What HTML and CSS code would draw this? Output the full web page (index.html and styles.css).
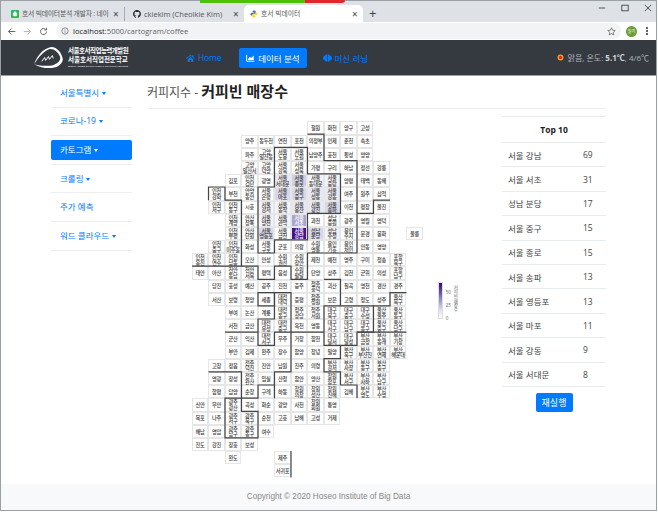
FILE: index.html
```html
<!DOCTYPE html>
<html lang="ko">
<head>
  <meta charset="UTF-8" />
  <title>호서 빅데이터</title>
  <link rel="stylesheet" href="styles.css">
</head>
<body>
  <div class="window">
    <div class="overhang"><span class="bar-green"></span><span class="bar-red"></span></div>

    <div class="tabs">
      <div class="tab tab-first">
        <svg class="favicon" viewBox="0 0 16 16"><rect width="16" height="16" rx="2" fill="#2db84d"/><path d="M4 6h8l-1 6H5zM6 6c0-2 1-3 2-3s2 1 2 3" fill="#fff" stroke="#fff"/></svg>
        <span class="tab-title">호서 빅데이터분석 개발자 : 네이</span>
        <span class="tab-x">×</span>
      </div>
      <div class="tab tab-second">
        <svg class="favicon" viewBox="0 0 16 16"><path fill="#24292e" d="M8 0C3.58 0 0 3.58 0 8c0 3.54 2.29 6.53 5.47 7.59.4.07.55-.17.55-.38 0-.19-.01-.82-.01-1.49-2.01.37-2.53-.49-2.69-.94-.09-.23-.48-.94-.82-1.13-.28-.15-.68-.52-.01-.53.63-.01 1.08.58 1.23.82.72 1.21 1.87.87 2.33.66.07-.52.28-.87.51-1.07-1.78-.2-3.64-.89-3.64-3.95 0-.87.31-1.59.82-2.15-.08-.2-.36-1.02.08-2.12 0 0 .67-.21 2.2.82.64-.18 1.32-.27 2-.27.68 0 1.36.09 2 .27 1.53-1.04 2.2-.82 2.2-.82.44 1.1.16 1.92.08 2.12.51.56.82 1.27.82 2.15 0 3.07-1.87 3.75-3.65 3.95.29.25.54.73.54 1.48 0 1.07-.01 1.93-.01 2.2 0 .21.15.46.55.38A8.013 8.013 0 0016 8c0-4.42-3.58-8-8-8z"/></svg>
        <span class="tab-title">ckiekim (Cheolkie Kim)</span>
        <span class="tab-x">×</span>
      </div>
      <div class="tab tab-active">
        <svg class="favicon" viewBox="0 0 16 16"><path fill="#3776ab" d="M8 1C5 1 5 2.5 5 3.5V5h3.5v1H3.5C2 6 1 7 1 8.5S2 11 3.5 11H5V9.5C5 8 6 7.5 7 7.5h3c1 0 1.500-.7 1.500-1.500V3.500C11.500 2 10 1 8 1z"/><path fill="#ffd43b" d="M8 15c3 0 3-1.500 3-2.500V11H7.500v-1h5c1.500 0 2.500-1 2.500-2.500S14 5 12.500 5H11v1.500C11 8 10 8.500 9 8.500H6c-1 0-1.500.7-1.500 1.500v2.500C4.500 14 6 15 8 15z"/></svg>
        <span class="tab-title">호서 빅데이터</span>
        <span class="tab-x">×</span>
      </div>
      <span class="tab-new">+</span>
      <div class="win-btns">
        <svg viewBox="0 0 10 10"><path d="M1 5h8" stroke="#333" stroke-width="1"/></svg>
        <svg viewBox="0 0 10 10"><rect x="1" y="1.500" width="8" height="7" fill="none" stroke="#333"/></svg>
        <svg viewBox="0 0 10 10"><path d="M1 1l8 8M9 1l-8 8" stroke="#333"/></svg>
      </div>
    </div>

    <div class="toolbar">
      <svg class="tool-icon" viewBox="0 0 12 12"><path d="M11 6H2M6 2L2 6l4 4" fill="none" stroke="#5f6368" stroke-width="1.300"/></svg>
      <svg class="tool-icon" viewBox="0 0 12 12"><path d="M1 6h9M6 2l4 4-4 4" fill="none" stroke="#b4b7bb" stroke-width="1.300"/></svg>
      <svg class="tool-icon" viewBox="0 0 12 12"><path d="M10 6a4 4 0 1 1-1.200-2.800M10 1v3H7" fill="none" stroke="#5f6368" stroke-width="1.300"/></svg>
      <div class="address">
        <svg class="info" viewBox="0 0 12 12"><circle cx="6" cy="6" r="4.800" fill="none" stroke="#5f6368"/><path d="M6 5.500v3M6 3.500v1" stroke="#5f6368"/></svg>
        <span class="url">localhost<span class="url-path">:5000/cartogram/coffee</span></span>
        <svg class="star" viewBox="0 0 12 12"><path d="M6 1l1.500 3.300 3.500.4-2.600 2.300.7 3.500L6 8.700 2.900 10.500l.7-3.500L1 4.700l3.500-.4z" fill="none" stroke="#5f6368"/></svg>
      </div>
      <span class="avatar">철기</span>
      <span class="kebab"></span>
    </div>

    <nav class="nav">
      <a class="brand" href="#">
        <svg class="brand-mark" viewBox="0 0 32 24">
          <path d="M1 19C4 10 11 2 19 1 25 1 30 7 31 14 30 20 24 23 17 23 11 23 6 22 1 19 8 21 15 21 21 20 26 18 29 15 28 11 26 6 22 3 18 3 12 4 6 11 1 19z" fill="#fff"/>
          <path d="M9 16l3-4 1 3 3-4 1 3 3-4 1 3" fill="none" stroke="#fff" stroke-width="1"/>
        </svg>
        <span class="brand-text">
          <b class="brand-line1">서울호서직업능력개발원</b>
          <b class="brand-line2">서울호서직업전문학교</b>
          <small>SEOUL HOSEO OCCUPATIONAL TRAINING COLLEGE</small>
        </span>
      </a>
      <a class="nav-link nav-home" href="#">
        <svg class="nav-icon" viewBox="0 0 16 14"><path fill="#007bff" d="M8 1L0 7.500l1 1L8 3l7 5.500 1-1-3-2.500V2h-2v1.500zM3 9v5h3.500v-3.500h3V14H13V9L8 5z"/></svg>
        Home
      </a>
      <a class="nav-link nav-active" href="#">
        <svg class="nav-icon" viewBox="0 0 14 12"><path d="M1 1v10h12" fill="none" stroke="#fff" stroke-width="1.500"/><path d="M3 8l3-4 2 2 4-4v7H3z" fill="#fff"/></svg>
        데이터 분석
      </a>
      <a class="nav-link" href="#">
        <svg class="nav-icon" viewBox="0 0 14 12"><path fill="#007bff" d="M6.500 0C4 0 3.500 1.500 3.500 2 1.500 2.500 0 4 0 6s1.500 3.500 3.500 4c0 1 1.500 2 3 2zM7.500 0c2.500 0 3 1.500 3 2 2 .5 3.500 2 3.500 4s-1.500 3.500-3.500 4c0 1-1.500 2-3 2z"/></svg>
        머신 러닝
      </a>
      <div class="weather">
        <svg class="sun" viewBox="0 0 12 12"><circle cx="6" cy="6" r="5" fill="#f5a623"/><circle cx="6" cy="6" r="2.800" fill="#e2231a"/></svg>
        <span>맑음, 온도: <b>5.1℃</b>, 4/6℃</span>
      </div>
    </nav>

    <div class="main">
      <ul class="side">
        <li><a href="#" class="caret">서울특별시</a></li>
        <li><a href="#" class="caret">코로나-19</a></li>
        <li><a href="#" class="caret side-active">카토그램</a></li>
        <li><a href="#" class="caret">크롤링</a></li>
        <li><a href="#">주가 예측</a></li>
        <li><a href="#" class="caret">워드 클라우드</a></li>
      </ul>

      <div class="content">
        <h3 class="title"><span class="title-sub">커피지수 - </span><strong>커피빈 매장수</strong></h3>
        <div class="content-body">
          <div class="carto" id="carto">
            <svg class="borders" viewBox="0 0 14 27" preserveAspectRatio="none">
              <path d="M5 2H7V4H9V7H7V9H5V10H4V5H5Z"/>
              <path d="M1 6V5H2V6H3V11"/>
              <path d="M0 11H4V12H5V11H6V12H7V10H10V3H8V1H7"/>
              <path d="M12 6H11V7H10"/>
              <path d="M4 13H5V14H4Z"/>
              <path d="M5 13H6V16H5V17H4V15H5Z"/>
              <path d="M2 16H4"/>
              <path d="M6 16V19H5V21"/>
              <path d="M5 20H4V21H3V19H1"/>
              <path d="M2 21H3V22H4V24H2Z"/>
              <path d="M6 25V27"/>
              <path d="M6 16H8"/>
              <path d="M8 12H9V14H8V17H10V16H11V14H9"/>
              <path d="M9 17V18H8V19H9V20H10V21"/>
              <path d="M10 16H13"/>
              <path d="M11 14H12V13H13"/>
            </svg>
            <div class="legend">
              <span class="legend-bar"></span>
              <span class="tick tick-50">50</span>
              <span class="tick tick-25">25</span>
              <span class="tick tick-0">0</span>
              <span class="legend-title">커피빈 매장수</span>
            </div>
          </div>

          <div class="top">
            <table class="top-table">
              <thead><tr><th colspan="2">Top 10</th></tr></thead>
              <tbody>
                <tr><td>서울 강남</td><td>69</td></tr>
                <tr><td>서울 서초</td><td>31</td></tr>
                <tr><td>성남 분당</td><td>17</td></tr>
                <tr><td>서울 중구</td><td>15</td></tr>
                <tr><td>서울 종로</td><td>15</td></tr>
                <tr><td>서울 송파</td><td>13</td></tr>
                <tr><td>서울 영등포</td><td>13</td></tr>
                <tr><td>서울 마포</td><td>11</td></tr>
                <tr><td>서울 강동</td><td>9</td></tr>
                <tr><td>서울 서대문</td><td>8</td></tr>
              </tbody>
            </table>
            <button class="rerun">재실행</button>
          </div>
        </div>
      </div>
    </div>

    <footer class="footer">Copyright © 2020 Hoseo Institute of Big Data</footer>
  </div>

  <script src="script.js"></script>
</body>
</html>
```

FILE: styles.css
```css
* {
  box-sizing: border-box;
}
body {
  margin: 0;
  font-family: "Open Sans", "Noto Sans CJK KR", sans-serif;
  background: white;
  color: #333;
}
a {
  text-decoration: none;
}
.window {
  position: relative;
  display: flex;
  flex-direction: column;
  width: 657px;
  height: 511px;
  border-left: 1px solid #9aa0a6;
  border-right: 1px solid #9aa0a6;
  border-bottom: 1px solid #9aa0a6;
  overflow: hidden;
}

/* browser frame */
.overhang {
  position: absolute;
  top: 0;
  left: 199px;
  display: flex;
  height: 3px;
  z-index: 2;
}
.bar-green {
  width: 105px;
  background: #4fc00a;
}
.bar-red {
  width: 40px;
  background: #e3262c;
  border-radius: 0 0 3px 0;
}
.tabs {
  display: flex;
  align-items: flex-end;
  flex: none;
  height: 22px;
  background: #dee1e6;
  border-top: 1px solid #9aa0a6;
}
.tab {
  display: flex;
  align-items: center;
  height: 17px;
  font-size: 6.800px;
  color: #555;
}
.tab-first {
  width: 124px;
  height: 14px;
  margin-bottom: 1px;
  padding-left: 10px;
  border-right: 1px solid #a9adb3;
}
.tab-first .tab-title {
  letter-spacing: -0.200px;
}
.tab-second {
  width: 119px;
  padding-left: 8px;
  font-size: 7.500px;
}
.tab-active {
  width: 119px;
  padding-left: 6px;
  background: white;
  border-radius: 5px 5px 0 0;
}
.favicon {
  flex: none;
  width: 8px;
  height: 8px;
  margin-right: 3px;
}
.tab-title {
  flex: 1;
  white-space: nowrap;
  line-height: 12px;
}
.tab-x {
  flex: none;
  width: 11px;
  font-size: 10px;
  line-height: 10px;
  color: #444;
}
.tab-new {
  margin: 0 0 1px 6px;
  font-size: 13px;
  line-height: 16px;
  color: #444;
}
.win-btns {
  display: flex;
  gap: 15px;
  margin-left: auto;
  align-self: flex-start;
  margin-top: 3px;
  padding-right: 4px;
}
.win-btns svg {
  width: 8px;
  height: 8px;
}
.toolbar {
  display: flex;
  align-items: center;
  flex: none;
  height: 18px;
  padding-left: 6px;
  background: white;
}
.tool-icon {
  flex: none;
  width: 9px;
  height: 9px;
  margin-right: 7px;
}
.address {
  display: flex;
  align-items: center;
  flex: none;
  width: 565px;
  height: 16px;
  margin-left: 1px;
  padding: 0 5px;
  background: #f1f3f4;
  border-radius: 8px;
}
.info {
  width: 8px;
  height: 8px;
  margin-right: 4px;
}
.url {
  flex: 1;
  font-size: 7.600px;
  color: #222;
}
.url-path {
  color: #5f6368;
}
.star {
  width: 9px;
  height: 9px;
}
.avatar {
  width: 11px;
  height: 11px;
  margin-left: 5px;
  border-radius: 50%;
  background: #6b9e35;
  color: white;
  font-size: 4px;
  line-height: 11px;
  text-align: center;
}
.kebab {
  width: 2px;
  height: 2px;
  margin-left: 9px;
  background: #5f6368;
  box-shadow: 0 -3px 0 #5f6368, 0 3px 0 #5f6368;
}

/* navbar */
.nav {
  display: flex;
  align-items: center;
  flex: none;
  height: 36px;
  padding-left: 32px;
  background: #343a40;
  border-bottom: 1px solid #9aa0a6;
}
.brand {
  display: flex;
  align-items: center;
  flex: none;
  width: 153px;
  color: white;
}
.brand-mark {
  width: 31px;
  height: 23px;
  margin-right: 4px;
}
.brand-text {
  display: flex;
  flex-direction: column;
  font-size: 6.500px;
  line-height: 8.500px;
  white-space: nowrap;
}
.brand-line1 {
  letter-spacing: -0.500px;
}
.brand-line2 {
  letter-spacing: 0;
}
.brand-text small {
  font-size: 2.500px;
  line-height: 4px;
}
.nav-link {
  display: flex;
  align-items: center;
  height: 20px;
  margin-right: 16px;
  border-radius: 2px;
  font-size: 8.500px;
  color: #007bff;
  white-space: nowrap;
}
.nav-home {
  margin-right: 18px;
  letter-spacing: -0.200px;
}
.nav-active {
  padding: 0 7px;
  background: #007bff;
  color: white;
}
.nav-icon {
  width: 9px;
  height: 8px;
  margin-right: 3px;
}
.weather {
  display: flex;
  align-items: center;
  margin-left: auto;
  padding-right: 7px;
  font-size: 8px;
  color: #adb5bd;
  white-space: nowrap;
}
.weather b {
  color: #ced4da;
}
.sun {
  width: 7px;
  height: 7px;
  margin-right: 4px;
}

/* main */
.main {
  display: flex;
  flex: 1;
}
.side {
  flex: none;
  width: 81px;
  margin: 0 15px 0 50px;
  padding: 3px 0 0;
  list-style: none;
}
.side li {
  display: flex;
  align-items: center;
  height: 28.600px;
  border-bottom: 1px solid #eee;
}
.side a {
  display: block;
  width: 100%;
  height: 20px;
  padding: 0 9px;
  border-radius: 2px;
  font-size: 8.500px;
  line-height: 20px;
  color: #007bff;
  white-space: nowrap;
}
.side .side-active {
  background: #007bff;
  color: white;
}
.caret::after {
  content: "";
  display: inline-block;
  margin-left: 3px;
  vertical-align: 1px;
  border-top: 3px solid;
  border-left: 2.500px solid transparent;
  border-right: 2.500px solid transparent;
}
.content {
  display: flex;
  flex-direction: column;
  flex: none;
  width: 459px;
}
.title {
  height: 33px;
  margin: 0;
  padding-top: 3px;
  border-bottom: 1px solid #eee;
  font-size: 15px;
  font-weight: 400;
  line-height: 24px;
  color: #222;
}
.title-sub {
  font-size: 12px;
  color: #555;
}
.title strong {
  font-weight: 700;
}
.content-body {
  display: flex;
  justify-content: space-between;
  align-items: flex-start;
}

/* cartogram */
.carto {
  position: relative;
  display: grid;
  grid-template-columns: repeat(14, 16.500px);
  grid-template-rows: repeat(27, 13.200px);
  margin: 12.400px 0 0 44.750px;
}
.cell {
  display: flex;
  flex-direction: column;
  align-items: center;
  justify-content: center;
  min-width: 0;
  min-height: 0;
  border: 0.500px solid #e6e6e6;
  background: white;
  font-family: "Noto Sans CJK KR", sans-serif;
  font-size: 5.200px;
  font-weight: 500;
  letter-spacing: -0.300px;
  white-space: nowrap;
  color: #3a3a3a;
}
.cell-line {
  display: block;
  height: 5.600px;
  line-height: 5.600px;
}
.l1 { background: #f4f3f9; }
.l2 { background: #e8e7f2; }
.l3 { background: #d9d8ea; }
.l4 { background: #cfcee5; }
.l5 { background: #a9a5cf; color: white; }
.l6 { background: #47128a; color: white; }
.borders {
  position: absolute;
  top: 0;
  left: 0;
  z-index: 1;
  width: 231px;
  height: 356.400px;
  fill: none;
  stroke: #444;
  stroke-width: 1.200px;
  pointer-events: none;
}
.borders path {
  vector-effect: non-scaling-stroke;
}
.legend {
  position: absolute;
  left: 246px;
  top: 161px;
  width: 24px;
  height: 40px;
  font-size: 4.500px;
  color: #666;
}
.legend-bar {
  position: absolute;
  left: 0;
  top: 0;
  width: 5px;
  height: 37px;
  background: linear-gradient(#3f007d, #807dba 40%, #dadaeb 75%, white);
  border: 0.500px solid #ddd;
}
.tick {
  position: absolute;
  left: 8px;
  line-height: 5px;
}
.tick-50 { top: 8px; }
.tick-25 { top: 21px; }
.tick-0 { top: 34px; }
.legend-title {
  position: absolute;
  left: 15px;
  top: 3px;
  writing-mode: vertical-rl;
  line-height: 6px;
  white-space: nowrap;
  letter-spacing: -0.200px;
}

/* top 10 */
.top {
  flex: none;
  width: 104px;
  margin-top: 7px;
  text-align: center;
}
.top-table {
  width: 100%;
  border-collapse: collapse;
  font-size: 8.500px;
  color: #444;
  text-align: left;
}
.top-table th {
  height: 26px;
  border-top: 1px solid #e9ecef;
  text-align: center;
  color: #222;
}
.top-table td {
  height: 24.400px;
  padding: 0 0 0 6px;
  border-top: 1px solid #e9ecef;
}
.top-table tbody tr:last-child td {
  border-bottom: 1px solid #e9ecef;
}
.top-table td:first-child {
  width: 75px;
}
.rerun {
  width: 37px;
  height: 19px;
  margin-top: 6px;
  padding: 0;
  background: #007bff;
  border: none;
  border-radius: 2px;
  font-family: inherit;
  font-size: 9px;
  color: white;
}

.footer {
  flex: none;
  height: 26px;
  background: #f8f9fa;
  font-family: "Liberation Sans", sans-serif;
  font-size: 8.200px;
  line-height: 26px;
  text-align: center;
  color: #888;
}
```

FILE: script.js
```js
// rows of the cartogram: [row, first column, names]. a space in a name breaks the line
const rows = [
  [0, 7, "철원,화천,양구,고성"],
  [1, 3, "양주,동두천,연천,포천,의정부,인제,춘천,속초"],
  [2, 3, "파주,고양 일산동,서울 도봉,서울 노원,남양주,홍천,횡성,양양"],
  [3, 3, "고양 일산서,고양 덕양,서울 강북,서울 성북,가평,구리,하남,정선,강릉"],
  [4, 2, "김포,인천 검단,광명,서울 서대문,서울 종로,서울 동대문,서울 중랑,양평,태백,동해"],
  [5, 1, "인천 강화,부천,안양 동안,서울 은평,서울 마포,서울 중구,서울 성동,서울 강동,여주,원주,삼척"],
  [6, 1, "인천 서구,인천 동구,시흥,서울 강서,서울 동작,서울 용산,서울 광진,서울 송파,이천,평창,울진"],
  [7, 2, "인천 계양,안산 상록,서울 양천,서울 관악,서울 서초,과천,성남 중원,광주,영월,영덕"],
  [8, 2, "인천 부평,안산 단원,서울 영등포,서울 금천,서울 강남,성남 분당,성남 수정,용인 수지,문경,봉화"],
  [8, 13, "울릉"],
  [9, 1, "인천 중구,인천 미추홀,화성,서울 구로,군포,의왕,수원 영통,용인 기흥,용인 처인,안동,영양"],
  [10, 0, "인천 옹진,인천 연수,인천 남동,오산,안성,수원 권선,수원 장안,제천,예천,영주,구미,청송,포항 북구"],
  [11, 0, "태안,아산,천안 동남,천안 서북,평택,음성,수원 팔달,단양,상주,김천,군위,의성,포항 남구"],
  [12, 1, "당진,홍성,예산,공주,진천,충주,청주 흥덕,괴산,칠곡,영천,경산,경주"],
  [13, 1, "서산,보령,청양,세종,대전 대덕,증평,청주 청원,보은,고령,청도,성주,울산 북구"],
  [14, 2, "부여,논산,계룡,대전 동구,청주 상당,청주 서원,대구 북구,대구 중구,대구 수성,울산 울주,울산 동구"],
  [15, 2, "서천,금산,대전 유성,대전 중구,옥천,영동,대구 서구,대구 남구,대구 동구,울산 중구,울산 남구"],
  [16, 2, "군산,익산,대전 서구,무주,거창,합천,대구 달서,대구 달성,부산 금정,부산 동래,부산 기장"],
  [17, 2, "부안,김제,완주,장수,함양,창녕,밀양,부산 북구,부산 부산진,부산 연제,부산 해운대"],
  [18, 1, "고창,정읍,전주 덕진,진안,남원,진주,의령,부산 강서,부산 사상,부산 동구,부산 중구"],
  [19, 1, "영광,장성,전주 완산,임실,산청,함안,양산,창원 합포,부산 서구,부산 사하,부산 남구"],
  [20, 1, "함평,담양,순창,구례,하동,창원 의창,창원 성산,창원 진해,김해,부산 영도,부산 수영"],
  [21, 0, "신안,무안,광주 광산,곡성,화순,광양,사천,창원 회원,통영"],
  [22, 0, "목포,나주,광주 서구,광주 북구,순천,고흥,남해,고성,거제"],
  [23, 0, "해남,영암,광주 남구,광주 동구,여수"],
  [24, 0, "진도,강진,장흥,보성"],
  [25, 2, "완도"],
  [25, 5, "제주"],
  [26, 5, "서귀포"]
];

// shade of a cell, by store count
const levels = {
  "서울 강남": 6, "서울 서초": 5, "성남 분당": 3, "서울 중구": 3, "서울 종로": 4,
  "서울 송파": 3, "서울 영등포": 3, "서울 마포": 3, "서울 강동": 2, "서울 서대문": 2,
  "서울 동대문": 1, "서울 중랑": 1, "서울 성동": 2, "서울 용산": 2, "서울 광진": 2,
  "서울 강서": 1, "서울 양천": 1, "서울 관악": 1, "서울 동작": 1, "성남 수정": 1
};

const carto = document.getElementById("carto");

rows.forEach(function (line) {
  line[2].split(",").forEach(function (name, i) {
    const cell = document.createElement("div");
    cell.className = "cell" + (levels[name] ? " l" + levels[name] : "");
    cell.style.gridRow = line[0] + 1;
    cell.style.gridColumn = line[1] + i + 1;
    name.split(" ").forEach(function (part) {
      const span = document.createElement("span");
      span.className = "cell-line";
      span.textContent = part;
      cell.appendChild(span);
    });
    carto.appendChild(cell);
  });
});
```
